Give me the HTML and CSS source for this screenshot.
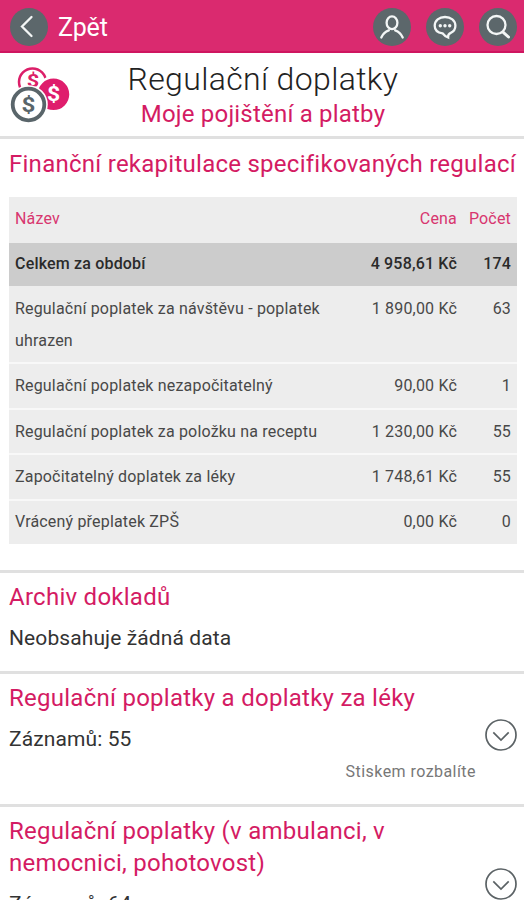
FILE: index.html
```html
<!DOCTYPE html>
<html lang="cs">
<head>
<meta charset="utf-8">
<title>Regulační doplatky</title>
<link rel="stylesheet" href="styles.css">
</head>
<body>
<div class="screen">
  <header class="topbar">
    <span class="round"><svg viewBox="0 0 38 38"><path d="M21.500 9 12 18.500 21.500 28"/></svg></span>
    <span class="back">Zpět</span>
    <nav class="actions">
      <span class="round"><svg viewBox="0 0 38 38"><ellipse cx="19" cy="14.800" rx="5.400" ry="6.400"/><path d="M8.300 29.500C10 25.500 12.500 23.500 15.800 22.300M29.700 29.500C28 25.500 25.500 23.500 22.200 22.300"/></svg></span>
      <span class="round"><svg viewBox="0 0 38 38"><path d="M16.500 25.300C11.600 24.700 8.700 21.800 8.700 17.800 8.700 12.500 13.300 9 19 9S29.400 12.500 29.400 17.800C29.400 20.900 27.700 23.600 24.700 24.900Q21.800 26 22.100 29.500 19 28.500 16.500 25.300Z"/><g class="dots"><circle cx="14.300" cy="17.700" r="1.700"/><circle cx="19" cy="17.700" r="1.700"/><circle cx="23.700" cy="17.700" r="1.700"/></g></svg></span>
      <span class="round"><svg viewBox="0 0 38 38"><circle cx="17.500" cy="17" r="9"/><path class="handle" d="M24.300 24.300 29.500 29"/></svg></span>
    </nav>
  </header>

  <section class="page-title">
    <svg class="coins" viewBox="0 0 60 56">
      <circle class="ring pink" cx="22.500" cy="15" r="13.500"/>
      <text class="pink-sign" transform="translate(23 19.500) scale(1.150 1)">$</text>
      <circle class="solid" cx="43.500" cy="27.300" r="17"/>
      <text class="white-sign" transform="translate(43.500 34) scale(1.150 1)">$</text>
      <circle class="gap" cx="18.500" cy="37.500" r="19.300"/>
      <circle class="ring grey" cx="18.500" cy="37.500" r="15.800"/>
      <text class="grey-sign" transform="translate(18.500 44.500) scale(1.150 1)">$</text>
    </svg>
    <div class="titles">
      <h1>Regulační doplatky</h1>
      <p>Moje pojištění a platby</p>
    </div>
  </section>

  <section class="recap">
    <h2>Finanční rekapitulace specifikovaných regulací</h2>
    <div class="table">
      <div class="row head"><span>Název</span><span>Cena</span><span>Počet</span></div>
      <div class="row total"><span>Celkem za období</span><span>4 958,61 Kč</span><span>174</span></div>
      <div class="row tall"><span>Regulační poplatek za návštěvu - poplatek uhrazen</span><span>1 890,00 Kč</span><span>63</span></div>
      <div class="row"><span>Regulační poplatek nezapočitatelný</span><span>90,00 Kč</span><span>1</span></div>
      <div class="row"><span>Regulační poplatek za položku na receptu</span><span>1 230,00 Kč</span><span>55</span></div>
      <div class="row"><span>Započitatelný doplatek za léky</span><span>1 748,61 Kč</span><span>55</span></div>
      <div class="row last"><span>Vrácený přeplatek ZPŠ</span><span>0,00 Kč</span><span>0</span></div>
    </div>
  </section>

  <section class="block archive">
    <h2>Archiv dokladů</h2>
    <p>Neobsahuje žádná data</p>
  </section>

  <section class="block fees">
    <div class="text">
      <h2>Regulační poplatky a doplatky za léky</h2>
      <p>Záznamů: 55</p>
      <small>Stiskem rozbalíte</small>
    </div>
    <svg class="chevron" viewBox="0 0 32 32"><circle cx="16" cy="16" r="15"/><path d="M8.300 13.300 16 21 23.700 13.300"/></svg>
  </section>

  <section class="block visits">
    <div class="text">
      <h2>Regulační poplatky (v ambulanci, v nemocnici, pohotovost)</h2>
      <p>Záznamů: 64</p>
    </div>
    <svg class="chevron" viewBox="0 0 32 32"><circle cx="16" cy="16" r="15"/><path d="M8.300 13.300 16 21 23.700 13.300"/></svg>
  </section>
</div>
</body>
</html>
```
FILE: styles.css
```css
* { box-sizing: border-box; }
body { margin: 0; background: #fff; font-family: Roboto, "Liberation Sans", sans-serif; }
h1, h2, p { margin: 0; font-weight: 400; }
.screen { height: 900px; overflow: hidden; }

.topbar { display: flex; align-items: center; height: 53px; padding: 3px 7px 0 10px; background: #da2a6f; border-bottom: 2px solid #cf1560; }
.back { margin-left: 10px; color: #fff; font-size: 25px; letter-spacing: -0.2px; }
.actions { display: flex; gap: 15px; margin-left: auto; }
.round { width: 38px; height: 38px; border-radius: 50%; background: #5c676b; }
.round svg { display: block; fill: none; stroke: #f3f6f6; stroke-width: 2.3; stroke-linecap: round; }
.round .dots { fill: #f3f6f6; stroke: none; }
.round .handle { stroke-width: 3; }

.page-title { display: flex; height: 86px; padding-left: 10px; border-bottom: 3px solid #e0e0e0; }
.coins { width: 60px; height: 56px; margin-top: 14px; font-family: Roboto, sans-serif; font-weight: 700; text-anchor: middle; }
.ring { fill: #fff; }
.pink { stroke: #dc1f69; stroke-width: 2.5; }
.grey { stroke: #59656a; stroke-width: 3.8; }
.solid { fill: #df1d6c; stroke: #fff; stroke-width: 2.5; }
.gap { fill: #fff; }
.pink-sign { fill: #dc1f69; font-size: 19px; }
.white-sign { fill: #fff; font-size: 20px; }
.grey-sign { fill: #59656a; font-size: 21px; }
.titles { flex: 1; margin-right: 68px; text-align: center; }
h1 { margin-top: 7px; color: #222; font-size: 32px; font-weight: 300; line-height: 38px; letter-spacing: 0.35px; white-space: nowrap; }
.titles p { margin-top: 1px; color: #d41b63; font-size: 24px; line-height: 30px; letter-spacing: 0.2px; }

h2 { color: #d41b63; font-size: 24px; line-height: 32px; letter-spacing: 0.26px; }
.recap { height: 431px; padding: 9px 7px 0 9px; }
.recap h2 { white-space: nowrap; }
.table { margin-top: 17px; color: #484848; font-size: 16px; line-height: 32px; letter-spacing: 0.18px; }
.row { display: grid; grid-template-columns: 1fr 110px 54px; height: 45.5px; padding: 6px 6px 0; background: #ededed; border-bottom: 2px solid #f8f8f8; }
.row span + span { text-align: right; white-space: nowrap; }
.head { height: 46px; border: 0; color: #d8366f; }
.total { height: 43px; padding-top: 5px; background: #ccc; border: 0; color: #2a2a2a; font-weight: 500; }
.tall { height: 78px; padding-top: 7px; }
.last { height: 43.5px; padding-top: 5px; border: 0; }

.block { border-top: 3px solid #e0e0e0; padding: 8px 7px 0 9px; }
.block p { margin-top: 9px; color: #333; font-size: 21px; line-height: 32px; letter-spacing: 0.1px; }
.archive { height: 101px; }
.fees { display: flex; height: 133px; }
.visits { display: flex; height: 200px; }
.text { flex: 1; }
.visits .text { padding-right: 60px; }
small { display: block; margin: 7px 9px 0 0; color: #777; font-size: 16px; line-height: 20px; text-align: right; letter-spacing: 0.45px; }
.chevron { flex: none; width: 32px; height: 32px; margin-top: 37px; fill: none; stroke: #5b6265; stroke-width: 1.7; }
.visits .chevron { margin-top: 53px; }
```
